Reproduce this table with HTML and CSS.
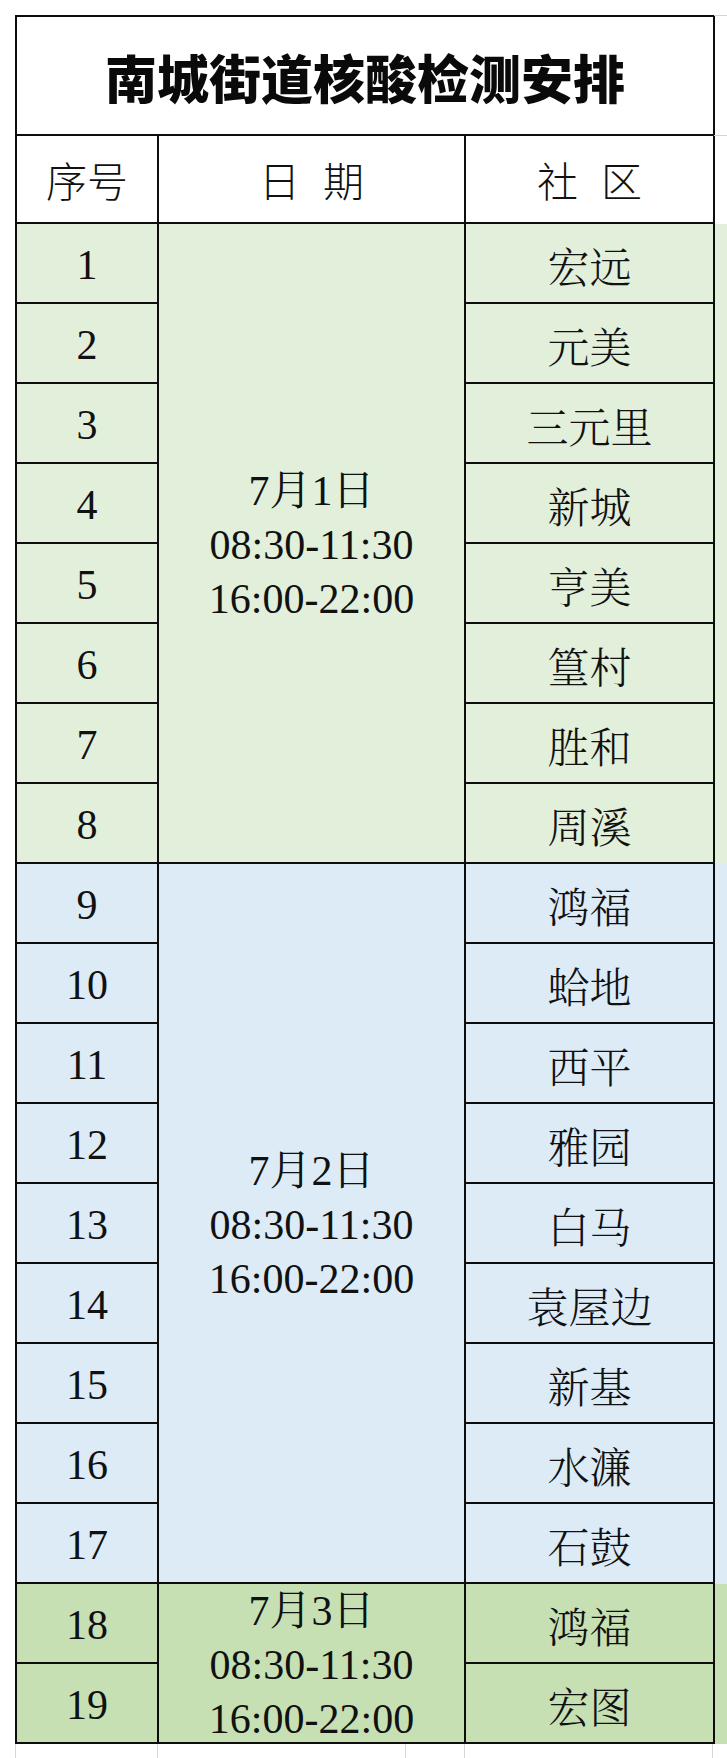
FILE: index.html
```html
<!DOCTYPE html>
<html lang="zh-CN">
<head>
<meta charset="utf-8">
<title>南城街道核酸检测安排</title>
<link rel="stylesheet" href="styles.css">
</head>
<body>
<div class="page">
  <div class="sheet">
    <div class="table">
      <div class="title">南城街道核酸检测安排</div>
      <div class="hd">序号</div>
      <div class="hd">日 期</div>
      <div class="hd">社 区</div>

      <div class="num c1 green">1</div>
      <div class="date c2 span1 green"><span>7月1日</span><span>08:30-11:30</span><span>16:00-22:00</span></div>
      <div class="name c3 green">宏远</div>
      <div class="num c1 green">2</div><div class="name c3 green">元美</div>
      <div class="num c1 green">3</div><div class="name c3 green">三元里</div>
      <div class="num c1 green">4</div><div class="name c3 green">新城</div>
      <div class="num c1 green">5</div><div class="name c3 green">亨美</div>
      <div class="num c1 green">6</div><div class="name c3 green">篁村</div>
      <div class="num c1 green">7</div><div class="name c3 green">胜和</div>
      <div class="num c1 green">8</div><div class="name c3 green">周溪</div>

      <div class="num c1 blue">9</div>
      <div class="date c2 span2 blue"><span>7月2日</span><span>08:30-11:30</span><span>16:00-22:00</span></div>
      <div class="name c3 blue">鸿福</div>
      <div class="num c1 blue">10</div><div class="name c3 blue">蛤地</div>
      <div class="num c1 blue">11</div><div class="name c3 blue">西平</div>
      <div class="num c1 blue">12</div><div class="name c3 blue">雅园</div>
      <div class="num c1 blue">13</div><div class="name c3 blue">白马</div>
      <div class="num c1 blue">14</div><div class="name c3 blue">袁屋边</div>
      <div class="num c1 blue">15</div><div class="name c3 blue">新基</div>
      <div class="num c1 blue">16</div><div class="name c3 blue">水濂</div>
      <div class="num c1 blue">17</div><div class="name c3 blue">石鼓</div>

      <div class="num c1 dgreen">18</div>
      <div class="date c2 span3 dgreen"><span>7月3日</span><span>08:30-11:30</span><span>16:00-22:00</span></div>
      <div class="name c3 dgreen">鸿福</div>
      <div class="num c1 dgreen">19</div><div class="name c3 dgreen">宏图</div>
    </div>
    <div class="strip">
      <div class="s-title"></div>
      <div class="s-head"></div>
      <div class="s-g1"></div>
      <div class="s-g2"></div>
      <div class="s-g3"></div>
    </div>
  </div>
  <div class="below">
    <div class="bc w1"></div>
    <div class="bc w2"></div>
    <div class="bc w3"></div>
    <div class="bc w4"></div>
    <div class="bc w5"></div>
  </div>
</div>
</body>
</html>
```

FILE: styles.css
```css
html, body {
  margin: 0;
  padding: 0;
  background: #ffffff;
}

.page {
  width: 727px;
  height: 1758px;
  overflow: hidden;
  padding-top: 15px;
  box-sizing: border-box;
  font-family: "Liberation Serif", "Noto Serif CJK SC", "Noto Sans CJK SC", serif;
  color: #111111;
}

.sheet {
  display: flex;
  padding-left: 15px;
}

.table {
  display: grid;
  grid-template-columns: 140px 305px 247px;
  grid-template-rows: 117px 86px repeat(19, 78px);
  gap: 2px;
  padding: 2px;
  background: #0d0d0d;
  flex: none;
}

.table > div {
  display: flex;
  align-items: center;
  justify-content: center;
  background: #ffffff;
}

.title {
  grid-column: 1 / -1;
  font-family: "Noto Sans CJK SC", sans-serif;
  font-weight: 900;
  font-size: 52px;
  letter-spacing: 0;
  color: #0a0a0a;
  padding-top: 2px;
}

.hd {
  font-family: "Noto Sans CJK SC", sans-serif;
  font-weight: 300;
  font-size: 41px;
  word-spacing: 14px;
  color: #111111;
}

.c1 { grid-column: 1; }
.c2 { grid-column: 2; }
.c3 { grid-column: 3; }

.span1 { grid-row: 3 / 11; }
.span2 { grid-row: 11 / 20; }
.span3 { grid-row: 20 / 22; }

.table > .green { background: #e2efda; }
.table > .blue { background: #ddebf7; }
.table > .dgreen { background: #c6e0b4; }

.num {
  font-family: "Liberation Serif", serif;
  font-size: 42px;
  padding-top: 4px;
}

.name {
  font-family: "Noto Serif CJK SC", "Noto Sans CJK SC", serif;
  font-weight: 300;
  font-size: 42px;
  padding-top: 4px;
}

.table > .date {
  flex-direction: column;
  font-family: "Liberation Serif", "Noto Serif CJK SC", "Noto Sans CJK SC", serif;
  font-size: 42px;
  line-height: 54px;
  padding-top: 4px;
}

.date span {
  display: block;
}

.strip {
  flex: 1;
  display: flex;
  flex-direction: column;
}

.s-title {
  height: 119px;
  border-top: 1px solid #d4d4d4;
  border-bottom: 1px solid #d4d4d4;
  margin-left: -1px;
}

.s-head { height: 88px; }
.s-g1 { height: 640px; background: #e2efda; }
.s-g2 { height: 720px; background: #ddebf7; }
.s-g3 { height: 160px; background: #c6e0b4; }

.below {
  display: grid;
  grid-template-columns: 142px 248px 59px 248px 1fr;
  height: 14px;
  margin-left: 15px;
}

.bc {
  border-left: 1px solid #d6d6d6;
}
```
